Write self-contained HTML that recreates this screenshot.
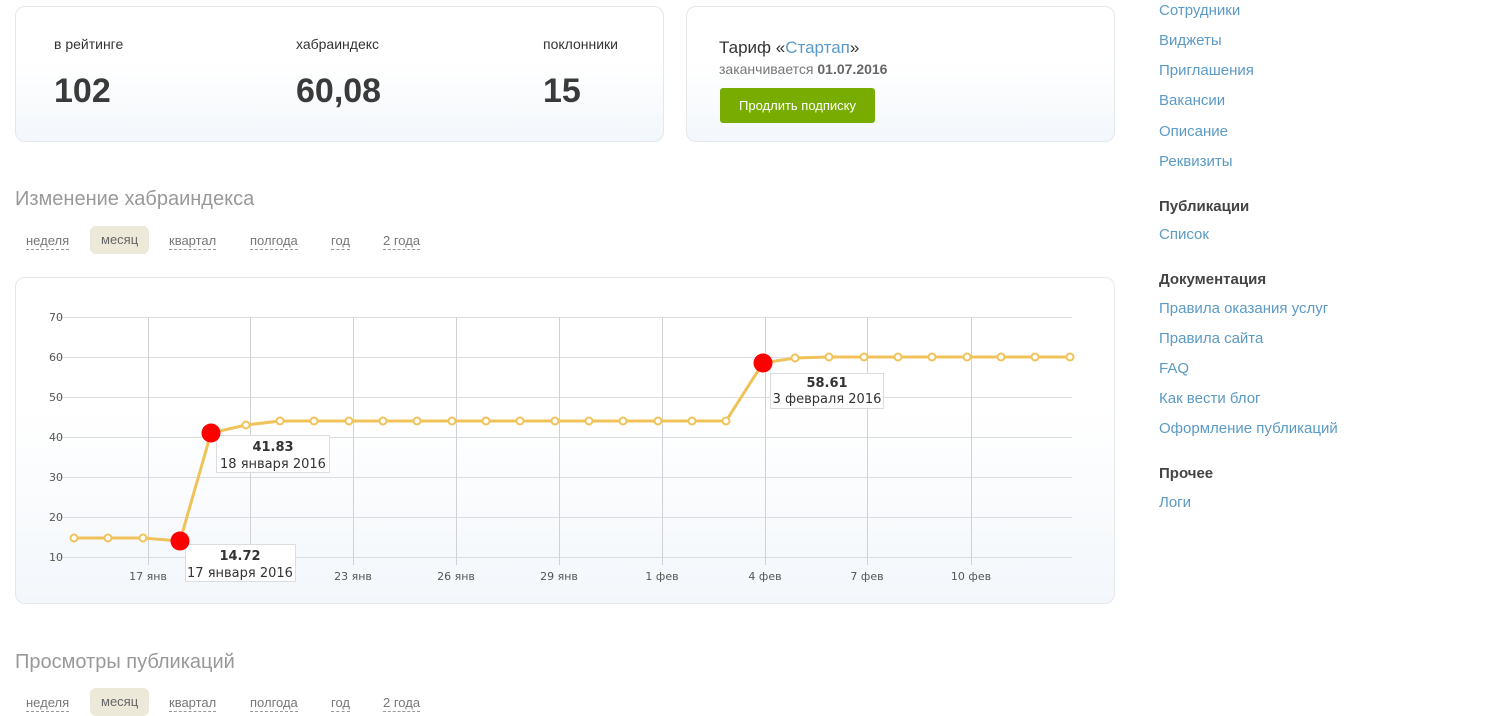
<!DOCTYPE html>
<html><head><meta charset="utf-8"><style>
*{box-sizing:border-box;margin:0;padding:0}
body{width:1496px;height:710px;overflow:hidden;background:#fff;font-family:"Liberation Sans","DejaVu Sans",sans-serif;color:#333;position:relative}
.card{position:absolute;border:1px solid #e3e8ec;border-radius:10px;background:linear-gradient(#fff 40%,#f3f7fb)}
.lbl{position:absolute;font-size:14px;color:#333}
.num{position:absolute;font-size:34px;font-weight:bold;color:#3a3a3a}
h2{position:absolute;font-weight:normal;font-size:20px;color:#999;left:15px}
.tabs{position:absolute;left:15px;font-size:13px;color:#777}
.tabs span{position:absolute;top:0;white-space:nowrap;border-bottom:1px dashed #999;line-height:16px}
.tabs .act{border:none;background:#ede9d8;border-radius:6px;padding:6px 11px;top:-7px;color:#666}
.side{position:absolute;left:1159px;font-size:15px;color:#5b9ac6}
.side div{position:absolute;white-space:nowrap}
.side b{color:#444}
</style></head><body>
<div class="card" style="left:15px;top:6px;width:649px;height:136px"></div>
<div class="lbl" style="left:54px;top:36px">в рейтинге</div>
<div class="lbl" style="left:296px;top:36px">хабраиндекс</div>
<div class="lbl" style="left:543px;top:36px">поклонники</div>
<div class="num" style="left:54px;top:72px">102</div>
<div class="num" style="left:296px;top:72px">60,08</div>
<div class="num" style="left:543px;top:72px">15</div>

<div class="card" style="left:686px;top:6px;width:429px;height:136px"></div>
<div style="position:absolute;left:719px;top:38px;font-size:17px;color:#333">Тариф «<span style="color:#5b9ac6">Стартап</span>»</div>
<div style="position:absolute;left:719px;top:61px;font-size:14px;color:#777">заканчивается <b style="color:#666">01.07.2016</b></div>
<div style="position:absolute;left:720px;top:88px;width:155px;height:35px;background:#78ad00;border-radius:3px;color:#fff;font-size:13px;text-align:center;line-height:35px">Продлить подписку</div>

<h2 style="top:188px">Изменение хабраиндекса</h2>
<div class="tabs" style="top:233px">
<span style="left:11px">неделя</span><span class="act" style="left:75px">месяц</span><span style="left:154px">квартал</span><span style="left:235px">полгода</span><span style="left:316px">год</span><span style="left:368px">2 года</span>
</div>

<div class="card" style="left:15px;top:277px;width:1100px;height:327px"></div>
<svg style="position:absolute;left:0;top:0" width="1130" height="610" font-family="DejaVu Sans,sans-serif">
<g stroke="#dcdde2" stroke-width="1">
<line x1="55" y1="317.5" x2="1072" y2="317.5"/><line x1="55" y1="357.5" x2="1072" y2="357.5"/><line x1="55" y1="397.5" x2="1072" y2="397.5"/><line x1="55" y1="437.5" x2="1072" y2="437.5"/><line x1="55" y1="477.5" x2="1072" y2="477.5"/><line x1="55" y1="517.5" x2="1072" y2="517.5"/><line x1="55" y1="557.5" x2="1072" y2="557.5"/>
<g stroke="#cfd0d8"><line x1="148.5" y1="317" x2="148.5" y2="565"/><line x1="250.5" y1="317" x2="250.5" y2="565"/><line x1="353.5" y1="317" x2="353.5" y2="565"/><line x1="456.5" y1="317" x2="456.5" y2="565"/><line x1="559.5" y1="317" x2="559.5" y2="565"/><line x1="662.5" y1="317" x2="662.5" y2="565"/><line x1="765.5" y1="317" x2="765.5" y2="565"/><line x1="867.5" y1="317" x2="867.5" y2="565"/><line x1="971.5" y1="317" x2="971.5" y2="565"/></g>
</g>
<g font-size="11" fill="#555" text-anchor="end">
<text x="63" y="321">70</text><text x="63" y="361">60</text><text x="63" y="401">50</text><text x="63" y="441">40</text><text x="63" y="481">30</text><text x="63" y="521">20</text><text x="63" y="561">10</text>
</g>
<g font-size="11" fill="#555" text-anchor="middle">
<text x="148" y="580">17 янв</text><text x="353" y="580">23 янв</text><text x="456" y="580">26 янв</text><text x="559" y="580">29 янв</text><text x="662" y="580">1 фев</text><text x="765" y="580">4 фев</text><text x="867" y="580">7 фев</text><text x="971" y="580">10 фев</text>
</g>
<polyline fill="none" stroke="#f0c35a" stroke-width="3" points="74,538 108,538 143,538 180,541 211,433 246,425 280,421 314,421 349,421 383,421 417,421 452,421 486,421 520,421 555,421 589,421 623,421 658,421 692,421 726,421 763,363 795,358 829,357 864,357 898,357 932,357 967,357 1001,357 1035,357 1070,357"/>
<g fill="#fff" stroke="#f0c35a" stroke-width="2">
<circle cx="74" cy="538" r="3.5"/><circle cx="108" cy="538" r="3.5"/><circle cx="143" cy="538" r="3.5"/><circle cx="246" cy="425" r="3.5"/><circle cx="280" cy="421" r="3.5"/><circle cx="314" cy="421" r="3.5"/><circle cx="349" cy="421" r="3.5"/><circle cx="383" cy="421" r="3.5"/><circle cx="417" cy="421" r="3.5"/><circle cx="452" cy="421" r="3.5"/><circle cx="486" cy="421" r="3.5"/><circle cx="520" cy="421" r="3.5"/><circle cx="555" cy="421" r="3.5"/><circle cx="589" cy="421" r="3.5"/><circle cx="623" cy="421" r="3.5"/><circle cx="658" cy="421" r="3.5"/><circle cx="692" cy="421" r="3.5"/><circle cx="726" cy="421" r="3.5"/><circle cx="795" cy="358" r="3.5"/><circle cx="829" cy="357" r="3.5"/><circle cx="864" cy="357" r="3.5"/><circle cx="898" cy="357" r="3.5"/><circle cx="932" cy="357" r="3.5"/><circle cx="967" cy="357" r="3.5"/><circle cx="1001" cy="357" r="3.5"/><circle cx="1035" cy="357" r="3.5"/><circle cx="1070" cy="357" r="3.5"/>
</g>
<g fill="#fff" stroke="#ddd">
<rect x="216.5" y="435.5" width="113" height="37"/><rect x="185.5" y="544.5" width="110" height="37"/><rect x="770.5" y="373.5" width="113" height="35"/>
</g>
<g fill="#333" text-anchor="middle" font-size="13">
<text x="273" y="451" font-weight="bold">41.83</text><text x="273" y="468">18 января 2016</text>
<text x="240" y="560" font-weight="bold">14.72</text><text x="240" y="577">17 января 2016</text>
<text x="827" y="387" font-weight="bold">58.61</text><text x="827" y="403">3 февраля 2016</text>
</g>
<g fill="#f00"><circle cx="180" cy="541" r="9.5"/><circle cx="211" cy="433" r="9.5"/><circle cx="763" cy="363" r="9.5"/></g>
</svg>

<h2 style="top:651px">Просмотры публикаций</h2>
<div class="tabs" style="top:695px">
<span style="left:11px">неделя</span><span class="act" style="left:75px">месяц</span><span style="left:154px">квартал</span><span style="left:235px">полгода</span><span style="left:316px">год</span><span style="left:368px">2 года</span>
</div>

<div class="side">
<div style="top:2px">Сотрудники</div><div style="top:32px">Виджеты</div><div style="top:62px">Приглашения</div><div style="top:92px">Вакансии</div><div style="top:123px">Описание</div><div style="top:153px">Реквизиты</div>
<div style="top:198px"><b>Публикации</b></div><div style="top:226px">Список</div>
<div style="top:271px"><b>Документация</b></div><div style="top:300px">Правила оказания услуг</div><div style="top:330px">Правила сайта</div><div style="top:360px">FAQ</div><div style="top:390px">Как вести блог</div><div style="top:420px">Оформление публикаций</div>
<div style="top:465px"><b>Прочее</b></div><div style="top:494px">Логи</div>
</div>
</body></html>
